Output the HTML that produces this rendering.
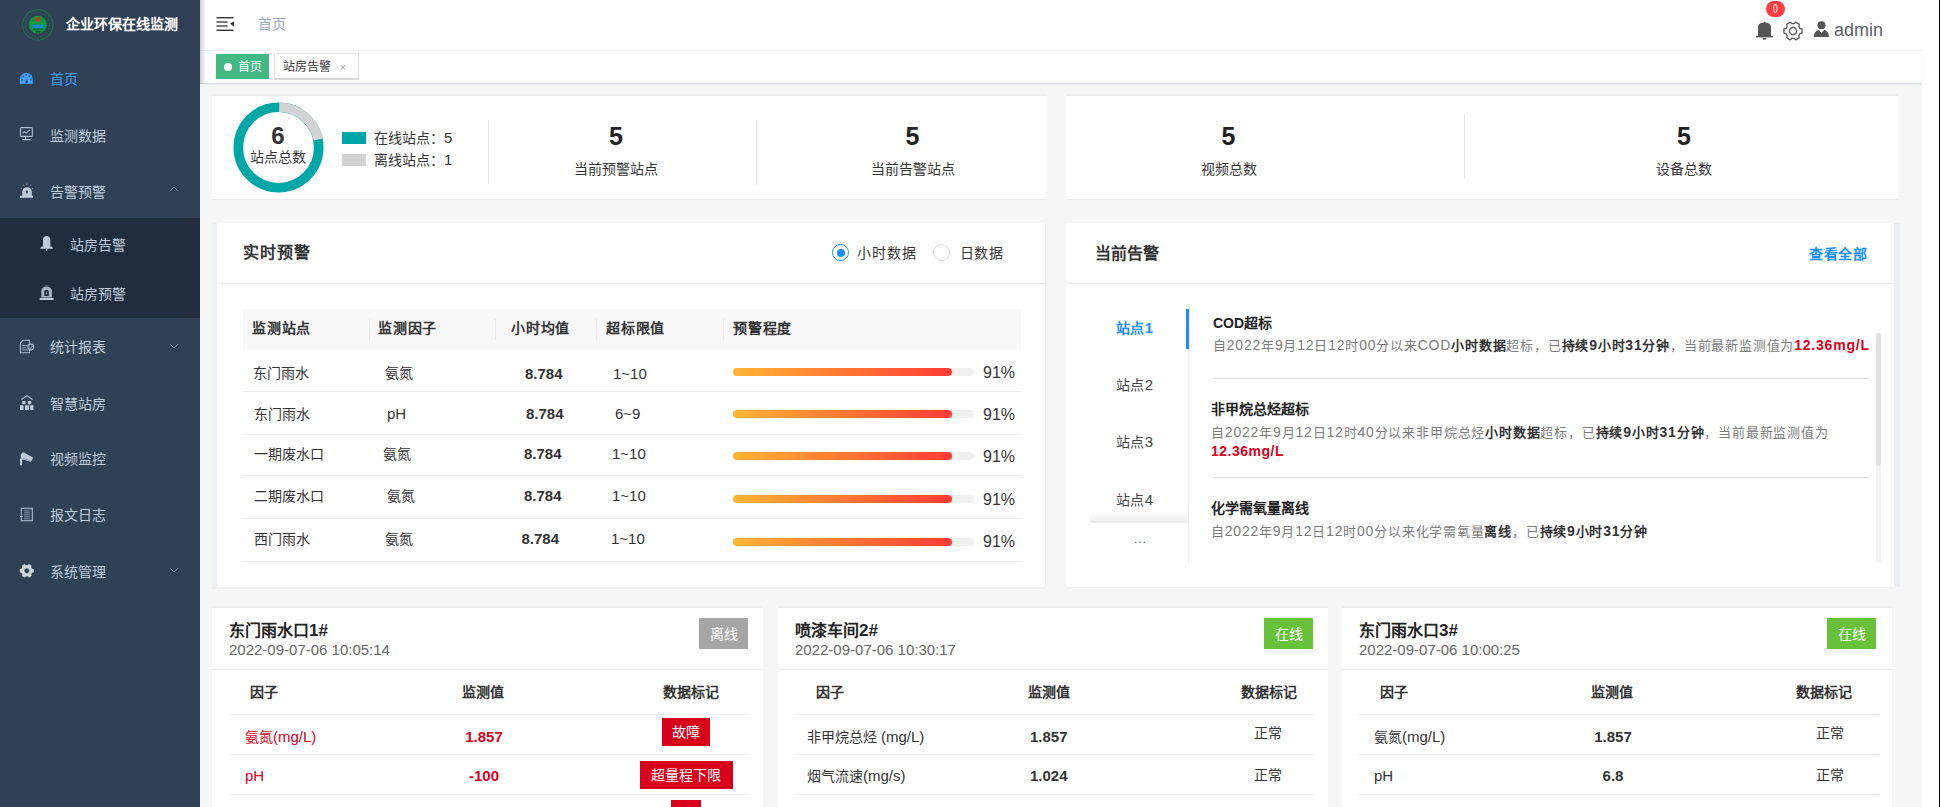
<!DOCTYPE html>
<html lang="zh-CN"><head><meta charset="utf-8"><style>
html,body{margin:0;padding:0;width:1940px;height:807px;overflow:hidden;font-family:"Liberation Sans", sans-serif;}
</style></head><body>
<div style="position:absolute;left:0px;top:0px;width:1940px;height:807px;background:#fff"></div>
<div style="position:absolute;left:200px;top:84px;width:1722px;height:723px;background:#f6f6f6"></div>
<div style="position:absolute;left:1939px;top:0px;width:1px;height:807px;background:#000"></div>
<div style="position:absolute;left:0px;top:0px;width:200px;height:807px;background:#304156"></div>
<div style="position:absolute;left:0px;top:218px;width:200px;height:100px;background:#1f2d3d"></div>
<svg style="position:absolute;left:22px;top:9px" width="32" height="32" viewBox="0 0 32 32">
<circle cx="15.8" cy="15.8" r="15.2" fill="none" stroke="#1e7a45" stroke-width="1.1" opacity="0.8"/>
<circle cx="15.8" cy="15.8" r="12.4" fill="none" stroke="#1e6a45" stroke-width="2.4" stroke-dasharray="1.6 1.4" opacity="0.55"/>
<circle cx="15.8" cy="15.7" r="9" fill="#0c9a3e"/>
<ellipse cx="15.8" cy="10.5" rx="2.2" ry="2.6" fill="#e02a22"/>
<path d="M10.2 19.5 L10.2 16.3 Q11.5 14.6 12.8 16.3 Q14.3 14.4 15.8 16.2 Q17.3 14.4 18.8 16.3 Q20.2 14.6 21.6 16.3 L21.6 19.5 Z" fill="#1a8ad0"/>
<rect x="11" y="19.5" width="9.6" height="1.2" fill="#0a5a2a" opacity="0.7"/>
<rect x="13.4" y="21.6" width="5" height="2.5" fill="#1a3a30" opacity="0.6"/>
</svg>
<div style="position:absolute;left:66px;top:17px;font-size:14px;line-height:14px;color:#fff;font-weight:bold;white-space:nowrap;">企业环保在线监测</div>
<div style="position:absolute;left:50px;top:72px;font-size:14px;line-height:14px;color:#409eff;font-weight:normal;white-space:nowrap;">首页</div>
<div style="position:absolute;left:50px;top:128.5px;font-size:14px;line-height:14px;color:#bfcbd9;font-weight:normal;white-space:nowrap;">监测数据</div>
<div style="position:absolute;left:50px;top:184.5px;font-size:14px;line-height:14px;color:#bfcbd9;font-weight:normal;white-space:nowrap;">告警预警</div>
<div style="position:absolute;left:70px;top:237.5px;font-size:14px;line-height:14px;color:#bfcbd9;font-weight:normal;white-space:nowrap;">站房告警</div>
<div style="position:absolute;left:70px;top:287px;font-size:14px;line-height:14px;color:#bfcbd9;font-weight:normal;white-space:nowrap;">站房预警</div>
<div style="position:absolute;left:50px;top:340px;font-size:14px;line-height:14px;color:#bfcbd9;font-weight:normal;white-space:nowrap;">统计报表</div>
<div style="position:absolute;left:50px;top:396.5px;font-size:14px;line-height:14px;color:#bfcbd9;font-weight:normal;white-space:nowrap;">智慧站房</div>
<div style="position:absolute;left:50px;top:452px;font-size:14px;line-height:14px;color:#bfcbd9;font-weight:normal;white-space:nowrap;">视频监控</div>
<div style="position:absolute;left:50px;top:508px;font-size:14px;line-height:14px;color:#bfcbd9;font-weight:normal;white-space:nowrap;">报文日志</div>
<div style="position:absolute;left:50px;top:564.5px;font-size:14px;line-height:14px;color:#bfcbd9;font-weight:normal;white-space:nowrap;">系统管理</div>
<svg style="position:absolute;left:169px;top:186px" width="10" height="6" viewBox="0 0 10 6"><path d="M1 5 L5 1 L9 5" fill="none" stroke="#7d8a9b" stroke-width="1"/></svg>
<svg style="position:absolute;left:169px;top:343px" width="10" height="6" viewBox="0 0 10 6"><path d="M1 1 L5 5 L9 1" fill="none" stroke="#7d8a9b" stroke-width="1"/></svg>
<svg style="position:absolute;left:169px;top:567px" width="10" height="6" viewBox="0 0 10 6"><path d="M1 1 L5 5 L9 1" fill="none" stroke="#7d8a9b" stroke-width="1"/></svg>
<svg style="position:absolute;left:16px;top:66px" width="24" height="24" viewBox="0 0 24 24"><path d="M3.9 18 L3.9 13.2 A6.4 6.4 0 0 1 16.7 13.2 L16.7 18 Z" fill="#409eff"/><circle cx="7.3" cy="10.2" r="0.8" fill="#304156"/><circle cx="13.4" cy="10.2" r="0.8" fill="#304156"/><circle cx="5.9" cy="13.8" r="0.8" fill="#304156"/><circle cx="15" cy="13.8" r="0.8" fill="#304156"/><circle cx="10.3" cy="8.8" r="0.7" fill="#304156"/><path d="M10 16 L11 12 L11.6 16 Z" fill="#304156"/><rect x="9.3" y="15.6" width="2.4" height="1.2" fill="#304156"/></svg>
<svg style="position:absolute;left:16px;top:122px" width="24" height="24" viewBox="0 0 24 24"><rect x="4.5" y="5.6" width="11.8" height="8.8" rx="1" fill="none" stroke="#bfcbd9" stroke-width="1.1" opacity="0.9"/><path d="M9.7 14.5 V17.4 M6.2 17.6 H14.6" stroke="#bfcbd9" stroke-width="1.1" opacity="0.9"/><path d="M6.5 11.2 L8.3 9.6 L10.3 11 L13.8 8" fill="none" stroke="#bfcbd9" stroke-width="1.3" opacity="0.8"/></svg>
<svg style="position:absolute;left:16px;top:178px" width="24" height="24" viewBox="0 0 24 24"><path d="M6.2 18 V14 A4.8 4.8 0 0 1 15.8 14 V18 Z" fill="#bfcbd9"/><rect x="4" y="17.8" width="13" height="2" fill="#bfcbd9"/><path d="M10.9 12.2 C9.8 12.2 9.6 13.5 10.1 14.5 L10.9 16 L11.7 14.5 C12.2 13.5 12 12.2 10.9 12.2Z" fill="#304156"/><g fill="#bfcbd9" opacity="0.7"><circle cx="10.9" cy="6.2" r="0.7"/><circle cx="7.3" cy="7" r="0.6"/><circle cx="14.5" cy="7" r="0.6"/><circle cx="5.2" cy="10.3" r="0.6"/><circle cx="16.5" cy="10.3" r="0.6"/></g></svg>
<svg style="position:absolute;left:36px;top:231px" width="24" height="24" viewBox="0 0 24 24"><path d="M7 16 V8.5 C7 6.5 8.8 5 10.6 5 C12.4 5 14.3 6.5 14.3 8.5 V16 Z" fill="#bfcbd9"/><path d="M4 17.8 L5.5 15.5 H15.8 L17.2 17.8 Z" fill="#bfcbd9"/><rect x="9.8" y="17.8" width="1.6" height="1.8" fill="#bfcbd9"/></svg>
<svg style="position:absolute;left:36px;top:281px" width="24" height="24" viewBox="0 0 24 24"><path d="M5.3 16.5 V10 A5.3 4.5 0 0 1 15.9 10 V16.5 Z" fill="#bfcbd9" opacity="0.85"/><path d="M8.3 15 V10.5 A2.3 2.3 0 0 1 12.8 10.5 V15 Z" fill="#1f2d3d"/><path d="M10.5 10.5 L11.5 12.5 L10.5 13.8 L9.6 12.5 Z" fill="#bfcbd9" opacity="0.7"/><rect x="3.7" y="17" width="14" height="2" fill="#bfcbd9"/><rect x="9" y="4.2" width="4" height="0.6" fill="#bfcbd9" opacity="0.4"/></svg>
<svg style="position:absolute;left:16px;top:334px" width="24" height="24" viewBox="0 0 24 24"><path d="M7 6.3 H13.5 V18.7 H4.4 V9 Z" fill="none" stroke="#bfcbd9" stroke-width="1.1" opacity="0.85"/><path d="M6 11.5 H11.5 M6 13.8 H10 M6 16 H12" stroke="#bfcbd9" stroke-width="1" opacity="0.75"/><circle cx="14.8" cy="13" r="2.9" fill="#304156" stroke="#bfcbd9" stroke-width="1.1" opacity="0.9"/><path d="M13.6 13.3 L14.6 14.3 L16.2 12" fill="none" stroke="#bfcbd9" stroke-width="0.9"/></svg>
<svg style="position:absolute;left:16px;top:390px" width="24" height="24" viewBox="0 0 24 24"><path d="M5.2 9.5 L10.9 5.8 L16.6 9.5" fill="none" stroke="#bfcbd9" stroke-width="1.2" opacity="0.85"/><g fill="#bfcbd9"><rect x="6.2" y="11" width="3.3" height="3.2"/><rect x="11.9" y="11" width="3.3" height="3.2"/><rect x="4" y="15.2" width="3.5" height="4.8"/><rect x="9" y="15.2" width="3.9" height="4.8"/><rect x="14" y="15.2" width="3.4" height="4.8"/></g></svg>
<svg style="position:absolute;left:16px;top:446px" width="24" height="24" viewBox="0 0 24 24"><path d="M4.6 9 L6.3 6.4 L8 6.6 L16.9 11.6 L16.4 13.4 L14.6 15.8 L9.5 14.2 L6 13.4 L6 19.2 L4 19.2 L4 12.4 L5.2 12.4 Z" fill="#bfcbd9"/><path d="M7 12.6 L13.5 14.3" stroke="#304156" stroke-width="0.6" opacity="0.6"/></svg>
<svg style="position:absolute;left:16px;top:502px" width="24" height="24" viewBox="0 0 24 24"><rect x="5.3" y="6.3" width="11" height="12.4" fill="none" stroke="#bfcbd9" stroke-width="1.1" opacity="0.9"/><g stroke="#bfcbd9" stroke-width="0.9" opacity="0.6"><path d="M8 8.8 H14.5 M8 10.8 H14 M8 12.8 H14 M8 14.8 H14 M8 16.8 H14"/></g><path d="M4 14.5 H6.5" stroke="#bfcbd9" stroke-width="0.8"/></svg>
<svg style="position:absolute;left:16px;top:558px" width="24" height="24" viewBox="0 0 24 24"><path fill="#d1d5da" fill-rule="evenodd" stroke="#d1d5da" stroke-width="0.6" stroke-linejoin="round" d="M15.87 14.65 L17.48 14.10 L17.48 11.50 L15.87 10.95 L14.94 9.33 L15.26 7.67 L13.01 6.37 L11.74 7.48 L9.86 7.48 L8.59 6.37 L6.34 7.67 L6.66 9.33 L5.73 10.95 L4.12 11.50 L4.12 14.10 L5.73 14.65 L6.66 16.27 L6.34 17.93 L8.59 19.23 L9.86 18.12 L11.74 18.12 L13.01 19.23 L15.26 17.93 L14.94 16.27 Z M13.50 12.8 A2.7 2.7 0 1 0 8.10 12.8 A2.7 2.7 0 1 0 13.50 12.8 Z"/></svg>
<div style="position:absolute;left:200px;top:0px;width:1722px;height:51px;background:#fff;border-bottom:1px solid #f0f0f0;box-sizing:border-box"></div>
<svg style="position:absolute;left:216px;top:17px" width="18" height="14" viewBox="0 0 18 14">
<rect x="0.5" y="0" width="17" height="1.4" fill="#333"/><rect x="0.5" y="4.3" width="11" height="1.4" fill="#444"/>
<rect x="0.5" y="8.3" width="11" height="1.4" fill="#444"/><rect x="0.5" y="12.6" width="17" height="1.4" fill="#333"/>
<path d="M18 4.2 L14 6.8 L18 9.4 Z" fill="#333"/></svg>
<div style="position:absolute;left:258px;top:17px;font-size:14px;line-height:14px;color:#97a8be;font-weight:normal;white-space:nowrap;">首页</div>
<svg style="position:absolute;left:1756px;top:21px" width="17" height="19" viewBox="0 0 17 19">
<path d="M2 15.2 L2 6.5 C2 3.2 4.5 1.8 7.6 1.6 L8.5 0.4 L9.4 1.6 C12.5 1.8 15 3.2 15 6.5 L15 15.2 Z" fill="#555"/>
<rect x="0" y="14.8" width="17" height="1.6" fill="#555"/>
<path d="M6.5 17 L10.5 17 C10.5 18.2 9.6 18.8 8.5 18.8 C7.4 18.8 6.5 18.2 6.5 17 Z" fill="#555"/></svg>
<div style="position:absolute;left:1766px;top:1px;width:19px;height:16px;border-radius:8px;background:#ff3d43;color:#fff;font-size:12px;line-height:16px;text-align:center;transform:scaleX(1)"><span style="display:inline-block;transform:scaleX(0.7)">0</span></div>
<svg style="position:absolute;left:1783px;top:21px" width="20" height="20" viewBox="0 0 20 20">
<path d="M16.91 12.65 L19.06 12.09 L19.06 7.91 L16.91 7.35 L15.75 5.34 L16.34 3.20 L12.72 1.11 L11.16 2.69 L8.84 2.69 L7.28 1.11 L3.66 3.20 L4.25 5.34 L3.09 7.35 L0.94 7.91 L0.94 12.09 L3.09 12.65 L4.25 14.66 L3.66 16.80 L7.28 18.89 L8.84 17.31 L11.16 17.31 L12.72 18.89 L16.34 16.80 L15.75 14.66 Z" fill="none" stroke="#555" stroke-width="1.3" stroke-linejoin="round"/>
<circle cx="10" cy="10" r="3.6" fill="none" stroke="#666" stroke-width="1.6"/></svg>
<svg style="position:absolute;left:1814px;top:21px" width="15" height="16" viewBox="0 0 15 16">
<circle cx="7.5" cy="4.2" r="4" fill="#555"/><path d="M0 16 C0 11 3 9 5 9 L7.5 12 L10 9 C12 9 15 11 15 16 Z" fill="#555"/></svg>
<div style="position:absolute;left:1834px;top:21px;font-size:18px;line-height:18px;color:#5a5e66;font-weight:normal;white-space:nowrap;">admin</div>
<div style="position:absolute;left:200px;top:0px;width:6px;height:84px;background:linear-gradient(90deg,rgba(0,21,41,.2),rgba(0,21,41,0));z-index:5"></div>
<div style="position:absolute;left:200px;top:51px;width:1722px;height:33px;background:#fff;border-bottom:1px solid #d8dce5;box-sizing:border-box;box-shadow:0 1px 2px 0 rgba(0,0,0,.05)"></div>
<div style="position:absolute;left:216px;top:54px;width:53px;height:25px;background:#42b983"></div>
<div style="position:absolute;left:224px;top:63px;width:8px;height:8px;border-radius:4px;background:#fff"></div>
<div style="position:absolute;left:238px;top:61px;font-size:12px;line-height:12px;color:#fff;font-weight:normal;white-space:nowrap;">首页</div>
<div style="position:absolute;left:274px;top:53px;width:85px;height:27px;background:#fff;border:1px solid #e2e2e2;border-bottom:2px solid #d9d9d9;box-sizing:border-box"></div>
<div style="position:absolute;left:283px;top:61px;font-size:12px;line-height:12px;color:#333;font-weight:normal;white-space:nowrap;">站房告警</div>
<div style="position:absolute;left:340px;top:63px;font-size:10px;line-height:10px;color:#999;font-weight:normal;white-space:nowrap;">×</div>
<div style="position:absolute;left:212px;top:94px;width:835px;height:106px;background:#fff;border-top:2px solid #efefef;border-bottom:1px solid #ebebeb;box-sizing:border-box"></div>
<div style="position:absolute;left:1066px;top:94px;width:832px;height:106px;background:#fff;border-top:2px solid #efefef;border-bottom:1px solid #ebebeb;box-sizing:border-box"></div>
<svg style="position:absolute;left:233px;top:102px" width="91" height="91" viewBox="0 0 91 91">
<circle cx="45.5" cy="45.5" r="40.2" fill="none" stroke="#00a7a7" stroke-width="9.6"/>
<path d="M46.2 5.3 A40.2 40.2 0 0 1 85.2 37.5" fill="none" stroke="#d3d3d3" stroke-width="9.6"/>
</svg>
<div style="position:absolute;left:78px;width:400px;text-align:center;top:124px;font-size:24px;line-height:24px;color:#333;font-weight:bold;white-space:nowrap;">6</div>
<div style="position:absolute;left:78px;width:400px;text-align:center;top:150px;font-size:14px;line-height:14px;color:#333;font-weight:normal;white-space:nowrap;">站点总数</div>
<div style="position:absolute;left:342px;top:132px;width:24px;height:12px;background:#00a7a7"></div>
<div style="position:absolute;left:342px;top:154px;width:24px;height:12px;background:#d3d3d3"></div>
<div style="position:absolute;left:374px;top:131px;font-size:14px;line-height:14px;color:#333;font-weight:normal;white-space:nowrap;">在线站点：<span style="font-size:15px">5</span></div>
<div style="position:absolute;left:374px;top:153px;font-size:14px;line-height:14px;color:#333;font-weight:normal;white-space:nowrap;">离线站点：<span style="font-size:15px">1</span></div>
<div style="position:absolute;left:488px;top:120px;width:1px;height:64px;background:#e6e6e6"></div>
<div style="position:absolute;left:756px;top:120px;width:1px;height:65px;background:#e6e6e6"></div>
<div style="position:absolute;left:1464px;top:114px;width:1px;height:65px;background:#e6e6e6"></div>
<div style="position:absolute;left:416px;width:400px;text-align:center;top:124px;font-size:25px;line-height:25px;color:#222;font-weight:bold;white-space:nowrap;">5</div>
<div style="position:absolute;left:416px;width:400px;text-align:center;top:162px;font-size:14px;line-height:14px;color:#333;font-weight:normal;white-space:nowrap;">当前预警站点</div>
<div style="position:absolute;left:712.5px;width:400px;text-align:center;top:124px;font-size:25px;line-height:25px;color:#222;font-weight:bold;white-space:nowrap;">5</div>
<div style="position:absolute;left:712.5px;width:400px;text-align:center;top:162px;font-size:14px;line-height:14px;color:#333;font-weight:normal;white-space:nowrap;">当前告警站点</div>
<div style="position:absolute;left:1028.5px;width:400px;text-align:center;top:124px;font-size:25px;line-height:25px;color:#222;font-weight:bold;white-space:nowrap;">5</div>
<div style="position:absolute;left:1028.5px;width:400px;text-align:center;top:162px;font-size:14px;line-height:14px;color:#333;font-weight:normal;white-space:nowrap;">视频总数</div>
<div style="position:absolute;left:1484px;width:400px;text-align:center;top:124px;font-size:25px;line-height:25px;color:#222;font-weight:bold;white-space:nowrap;">5</div>
<div style="position:absolute;left:1484px;width:400px;text-align:center;top:162px;font-size:14px;line-height:14px;color:#333;font-weight:normal;white-space:nowrap;">设备总数</div>
<div style="position:absolute;left:212px;top:223px;width:5px;height:366px;background:#eef0f3"></div>
<div style="position:absolute;left:217px;top:223px;width:829px;height:364px;background:#fff;border-right:1px solid #ebebeb;box-sizing:border-box"></div>
<div style="position:absolute;left:212px;top:587px;width:835px;height:2px;background:#efefef"></div>
<div style="position:absolute;left:217px;top:283px;width:829px;height:1px;background:#ededed"></div>
<div style="position:absolute;left:243px;top:245px;font-size:16px;line-height:16px;color:#333;font-weight:bold;white-space:nowrap;letter-spacing:1px">实时预警</div>
<div style="position:absolute;left:832px;top:244px;width:17px;height:17px;border-radius:50%;border:1.5px solid #1890ff;box-sizing:border-box;background:#fff"></div><div style="position:absolute;left:836.5px;top:248.5px;width:8px;height:8px;border-radius:50%;background:#1890ff"></div>
<div style="position:absolute;left:857px;top:246px;font-size:14px;line-height:14px;color:#333;font-weight:normal;white-space:nowrap;letter-spacing:0.9px">小时数据</div>
<div style="position:absolute;left:933px;top:244px;width:17px;height:17px;border-radius:50%;border:1.2px solid #d9d9d9;box-sizing:border-box;background:#fff"></div>
<div style="position:absolute;left:960px;top:246px;font-size:14px;line-height:14px;color:#333;font-weight:normal;white-space:nowrap;letter-spacing:0.4px">日数据</div>
<div style="position:absolute;left:243px;top:309px;width:778px;height:41px;background:#f8f8f9"></div>
<div style="position:absolute;left:369px;top:319px;width:1px;height:21px;background:#e8e8e8"></div>
<div style="position:absolute;left:495px;top:319px;width:1px;height:21px;background:#e8e8e8"></div>
<div style="position:absolute;left:596px;top:319px;width:1px;height:21px;background:#e8e8e8"></div>
<div style="position:absolute;left:723px;top:319px;width:1px;height:21px;background:#e8e8e8"></div>
<div style="position:absolute;left:252px;top:321px;font-size:14px;line-height:14px;color:#333;font-weight:bold;white-space:nowrap;letter-spacing:0.8px">监测站点</div>
<div style="position:absolute;left:378px;top:321px;font-size:14px;line-height:14px;color:#333;font-weight:bold;white-space:nowrap;letter-spacing:0.8px">监测因子</div>
<div style="position:absolute;left:511px;top:321px;font-size:14px;line-height:14px;color:#333;font-weight:bold;white-space:nowrap;letter-spacing:0.8px">小时均值</div>
<div style="position:absolute;left:606px;top:321px;font-size:14px;line-height:14px;color:#333;font-weight:bold;white-space:nowrap;letter-spacing:0.8px">超标限值</div>
<div style="position:absolute;left:733px;top:321px;font-size:14px;line-height:14px;color:#333;font-weight:bold;white-space:nowrap;letter-spacing:0.8px">预警程度</div>
<div style="position:absolute;left:243px;top:391px;width:778px;height:1px;background:#ededed"></div>
<div style="position:absolute;left:253px;top:366px;font-size:14px;line-height:14px;color:#333;font-weight:normal;white-space:nowrap;">东门雨水</div>
<div style="position:absolute;left:385px;top:366px;font-size:14px;line-height:14px;color:#333;font-weight:normal;white-space:nowrap;">氨氮</div>
<div style="position:absolute;left:525px;top:365.5px;font-size:15px;line-height:15px;color:#333;font-weight:bold;white-space:nowrap;">8.784</div>
<div style="position:absolute;left:613px;top:365.5px;font-size:15px;line-height:15px;color:#333;font-weight:normal;white-space:nowrap;">1~10</div>
<div style="position:absolute;left:733px;top:367.5px;width:241px;height:8.4px;background:#f0f0f0;border-radius:4.2px"></div>
<div style="position:absolute;left:733px;top:367.5px;width:219px;height:8.4px;background:linear-gradient(90deg,#ffb534,#ff3b36);border-radius:4.2px"></div>
<div style="position:absolute;left:983px;top:365px;font-size:16px;line-height:16px;color:#333;font-weight:normal;white-space:nowrap;">91%</div>
<div style="position:absolute;left:243px;top:434px;width:778px;height:1px;background:#ededed"></div>
<div style="position:absolute;left:254px;top:406.5px;font-size:14px;line-height:14px;color:#333;font-weight:normal;white-space:nowrap;">东门雨水</div>
<div style="position:absolute;left:387px;top:405.5px;font-size:15px;line-height:15px;color:#333;font-weight:normal;white-space:nowrap;">pH</div>
<div style="position:absolute;left:526px;top:406.0px;font-size:15px;line-height:15px;color:#333;font-weight:bold;white-space:nowrap;">8.784</div>
<div style="position:absolute;left:615px;top:406.0px;font-size:15px;line-height:15px;color:#333;font-weight:normal;white-space:nowrap;">6~9</div>
<div style="position:absolute;left:733px;top:410px;width:241px;height:8.4px;background:#f0f0f0;border-radius:4.2px"></div>
<div style="position:absolute;left:733px;top:410px;width:219px;height:8.4px;background:linear-gradient(90deg,#ffb534,#ff3b36);border-radius:4.2px"></div>
<div style="position:absolute;left:983px;top:407.3px;font-size:16px;line-height:16px;color:#333;font-weight:normal;white-space:nowrap;">91%</div>
<div style="position:absolute;left:243px;top:475px;width:778px;height:1px;background:#ededed"></div>
<div style="position:absolute;left:254px;top:446.5px;font-size:14px;line-height:14px;color:#333;font-weight:normal;white-space:nowrap;">一期废水口</div>
<div style="position:absolute;left:383px;top:446.5px;font-size:14px;line-height:14px;color:#333;font-weight:normal;white-space:nowrap;">氨氮</div>
<div style="position:absolute;left:524px;top:446.0px;font-size:15px;line-height:15px;color:#333;font-weight:bold;white-space:nowrap;">8.784</div>
<div style="position:absolute;left:612px;top:446.0px;font-size:15px;line-height:15px;color:#333;font-weight:normal;white-space:nowrap;">1~10</div>
<div style="position:absolute;left:733px;top:452px;width:241px;height:8.4px;background:#f0f0f0;border-radius:4.2px"></div>
<div style="position:absolute;left:733px;top:452px;width:219px;height:8.4px;background:linear-gradient(90deg,#ffb534,#ff3b36);border-radius:4.2px"></div>
<div style="position:absolute;left:983px;top:449.4px;font-size:16px;line-height:16px;color:#333;font-weight:normal;white-space:nowrap;">91%</div>
<div style="position:absolute;left:243px;top:518px;width:778px;height:1px;background:#ededed"></div>
<div style="position:absolute;left:254px;top:488.5px;font-size:14px;line-height:14px;color:#333;font-weight:normal;white-space:nowrap;">二期废水口</div>
<div style="position:absolute;left:387px;top:488.5px;font-size:14px;line-height:14px;color:#333;font-weight:normal;white-space:nowrap;">氨氮</div>
<div style="position:absolute;left:524px;top:488.0px;font-size:15px;line-height:15px;color:#333;font-weight:bold;white-space:nowrap;">8.784</div>
<div style="position:absolute;left:612px;top:488.0px;font-size:15px;line-height:15px;color:#333;font-weight:normal;white-space:nowrap;">1~10</div>
<div style="position:absolute;left:733px;top:495px;width:241px;height:8.4px;background:#f0f0f0;border-radius:4.2px"></div>
<div style="position:absolute;left:733px;top:495px;width:219px;height:8.4px;background:linear-gradient(90deg,#ffb534,#ff3b36);border-radius:4.2px"></div>
<div style="position:absolute;left:983px;top:491.6px;font-size:16px;line-height:16px;color:#333;font-weight:normal;white-space:nowrap;">91%</div>
<div style="position:absolute;left:243px;top:561px;width:778px;height:1px;background:#ededed"></div>
<div style="position:absolute;left:254px;top:531.5px;font-size:14px;line-height:14px;color:#333;font-weight:normal;white-space:nowrap;">西门雨水</div>
<div style="position:absolute;left:385px;top:531.5px;font-size:14px;line-height:14px;color:#333;font-weight:normal;white-space:nowrap;">氨氮</div>
<div style="position:absolute;left:521.5px;top:531.0px;font-size:15px;line-height:15px;color:#333;font-weight:bold;white-space:nowrap;">8.784</div>
<div style="position:absolute;left:611px;top:531.0px;font-size:15px;line-height:15px;color:#333;font-weight:normal;white-space:nowrap;">1~10</div>
<div style="position:absolute;left:733px;top:537.5px;width:241px;height:8.4px;background:#f0f0f0;border-radius:4.2px"></div>
<div style="position:absolute;left:733px;top:537.5px;width:219px;height:8.4px;background:linear-gradient(90deg,#ffb534,#ff3b36);border-radius:4.2px"></div>
<div style="position:absolute;left:983px;top:533.7px;font-size:16px;line-height:16px;color:#333;font-weight:normal;white-space:nowrap;">91%</div>
<div style="position:absolute;left:1066px;top:223px;width:828px;height:365px;background:#fff;border-bottom:1px solid #efefef;box-sizing:border-box"></div>
<div style="position:absolute;left:1894px;top:223px;width:6px;height:364px;background:#eceef3"></div>
<div style="position:absolute;left:1066px;top:283px;width:828px;height:1px;background:#ededed"></div>
<div style="position:absolute;left:1095px;top:246px;font-size:16px;line-height:16px;color:#333;font-weight:bold;white-space:nowrap;">当前告警</div>
<div style="position:absolute;left:1809px;top:247px;font-size:14px;line-height:14px;color:#1890ff;font-weight:bold;white-space:nowrap;letter-spacing:0.5px">查看全部</div>
<div style="position:absolute;left:1188px;top:309px;width:1px;height:254px;background:#ececec"></div>
<div style="position:absolute;left:1186px;top:309px;width:3px;height:40px;background:#1890ff"></div>
<div style="position:absolute;left:1116px;top:321px;font-size:14px;line-height:14px;color:#1890ff;font-weight:bold;white-space:nowrap;letter-spacing:0.4px">站点<span style="font-size:15px">1</span></div>
<div style="position:absolute;left:1116px;top:378px;font-size:14px;line-height:14px;color:#444;font-weight:normal;white-space:nowrap;letter-spacing:0.4px">站点<span style="font-size:15px">2</span></div>
<div style="position:absolute;left:1116px;top:435px;font-size:14px;line-height:14px;color:#444;font-weight:normal;white-space:nowrap;letter-spacing:0.4px">站点<span style="font-size:15px">3</span></div>
<div style="position:absolute;left:1116px;top:493px;font-size:14px;line-height:14px;color:#444;font-weight:normal;white-space:nowrap;letter-spacing:0.4px">站点<span style="font-size:15px">4</span></div>
<div style="position:absolute;left:1134px;top:533px;font-size:12px;line-height:12px;color:#555;font-weight:normal;white-space:nowrap;letter-spacing:1px">...</div>
<div style="position:absolute;left:1090px;top:511px;width:98px;height:12px;background:linear-gradient(#fff,#ececec)"></div>
<div style="position:absolute;left:1213px;top:316px;font-size:14px;line-height:14px;color:#222;font-weight:bold;white-space:nowrap;">COD超标</div>
<div style="position:absolute;left:1213px;top:339px;font-size:13px;line-height:13px;color:#7a7a7a;font-weight:normal;white-space:nowrap;letter-spacing:0.79px">自<span style="font-size:14px">2022</span>年<span style="font-size:14px">9</span>月<span style="font-size:14px">12</span>日<span style="font-size:14px">12</span>时<span style="font-size:14px">00</span>分以来<span style="font-size:14px">COD</span><b style="color:#333">小时数据</b>超标，已<b style="color:#333">持续<span style="font-size:14px">9</span>小时<span style="font-size:14px">31</span>分钟</b>，当前最新监测值为<b style="color:#d9001b"><span style="font-size:14px">12.36mg/L</span></b></div>
<div style="position:absolute;left:1211px;top:378px;width:657px;height:1px;background:#e6e6e6"></div>
<div style="position:absolute;left:1211px;top:402px;font-size:14px;line-height:14px;color:#222;font-weight:bold;white-space:nowrap;">非甲烷总烃超标</div>
<div style="position:absolute;left:1211px;top:426px;font-size:13px;line-height:13px;color:#7a7a7a;font-weight:normal;white-space:nowrap;letter-spacing:0.81px">自<span style="font-size:14px">2022</span>年<span style="font-size:14px">9</span>月<span style="font-size:14px">12</span>日<span style="font-size:14px">12</span>时<span style="font-size:14px">40</span>分以来非甲烷总烃<b style="color:#333">小时数据</b>超标，已<b style="color:#333">持续<span style="font-size:14px">9</span>小时<span style="font-size:14px">31</span>分钟</b>，当前最新监测值为</div>
<div style="position:absolute;left:1211px;top:445px;font-size:13px;line-height:13px;color:#d9001b;font-weight:normal;white-space:nowrap;letter-spacing:0.5px"><b style="color:#d9001b"><span style="font-size:14px">12.36mg/L</span></b></div>
<div style="position:absolute;left:1211px;top:477px;width:657px;height:1px;background:#e6e6e6"></div>
<div style="position:absolute;left:1211px;top:501px;font-size:14px;line-height:14px;color:#222;font-weight:bold;white-space:nowrap;">化学需氧量离线</div>
<div style="position:absolute;left:1211px;top:525px;font-size:13px;line-height:13px;color:#7a7a7a;font-weight:normal;white-space:nowrap;letter-spacing:0.78px">自<span style="font-size:14px">2022</span>年<span style="font-size:14px">9</span>月<span style="font-size:14px">12</span>日<span style="font-size:14px">12</span>时<span style="font-size:14px">00</span>分以来化学需氧量<b style="color:#333">离线</b>，已<b style="color:#333">持续<span style="font-size:14px">9</span>小时<span style="font-size:14px">31</span>分钟</b></div>
<div style="position:absolute;left:1876px;top:333px;width:5px;height:230px;background:#f4f4f4;border-radius:3px"></div>
<div style="position:absolute;left:1876px;top:333px;width:5px;height:133px;background:#e2e2e2;border-radius:3px"></div>
<div style="position:absolute;left:212px;top:606px;width:551px;height:201px;background:#fff;border-top:2px solid #efefef;box-sizing:border-box"></div>
<div style="position:absolute;left:212px;top:669px;width:551px;height:1px;background:#ededed"></div>
<div style="position:absolute;left:229px;top:622.5px;font-size:16px;line-height:16px;color:#222;font-weight:bold;white-space:nowrap;">东门雨水口<span style="font-size:17px">1#</span></div>
<div style="position:absolute;left:229px;top:642px;font-size:15px;line-height:15px;color:#666;font-weight:normal;white-space:nowrap;">2022-09-07-06 10:05:14</div>
<div style="position:absolute;left:699px;top:618px;width:49px;height:31px;background:#a6a6a6"></div>
<div style="position:absolute;left:523.5px;width:400px;text-align:center;top:627px;font-size:14px;line-height:14px;color:#fff;font-weight:normal;white-space:nowrap;">离线</div>
<div style="position:absolute;left:250px;top:685px;font-size:14px;line-height:14px;color:#333;font-weight:bold;white-space:nowrap;">因子</div>
<div style="position:absolute;left:282.8px;width:400px;text-align:center;top:685px;font-size:14px;line-height:14px;color:#333;font-weight:bold;white-space:nowrap;">监测值</div>
<div style="position:absolute;left:662.5px;top:685px;font-size:14px;line-height:14px;color:#333;font-weight:bold;white-space:nowrap;">数据标记</div>
<div style="position:absolute;left:229px;top:714px;width:520px;height:1px;background:#ededed"></div>
<div style="position:absolute;left:229px;top:754px;width:520px;height:1px;background:#ededed"></div>
<div style="position:absolute;left:229px;top:794px;width:520px;height:1px;background:#ededed"></div>
<div style="position:absolute;left:245px;top:729.5px;font-size:14px;line-height:14px;color:#d9001b;font-weight:normal;white-space:nowrap;">氨氮<span style="font-size:15px">(mg/L)</span></div>
<div style="position:absolute;left:284px;width:400px;text-align:center;top:729.0px;font-size:15px;line-height:15px;color:#d9001b;font-weight:bold;white-space:nowrap;">1.857</div>
<div style="position:absolute;left:662.0px;top:718px;width:48px;height:28px;background:#d9001b;color:#fff;font-size:14px;line-height:28px;text-align:center">故障</div>
<div style="position:absolute;left:245px;top:768.5px;font-size:14px;line-height:14px;color:#d9001b;font-weight:normal;white-space:nowrap;"><span style="font-size:15px">pH</span></div>
<div style="position:absolute;left:284px;width:400px;text-align:center;top:768.0px;font-size:15px;line-height:15px;color:#d9001b;font-weight:bold;white-space:nowrap;">-100</div>
<div style="position:absolute;left:639.5px;top:760.5px;width:93px;height:28px;background:#d9001b;color:#fff;font-size:14px;line-height:28px;text-align:center">超量程下限</div>
<div style="position:absolute;left:671px;top:800px;width:30px;height:7px;background:#d9001b"></div>
<div style="position:absolute;left:778px;top:606px;width:550px;height:201px;background:#fff;border-top:2px solid #efefef;box-sizing:border-box"></div>
<div style="position:absolute;left:778px;top:669px;width:550px;height:1px;background:#ededed"></div>
<div style="position:absolute;left:795px;top:622.5px;font-size:16px;line-height:16px;color:#222;font-weight:bold;white-space:nowrap;">喷漆车间<span style="font-size:17px">2#</span></div>
<div style="position:absolute;left:795px;top:642px;font-size:15px;line-height:15px;color:#666;font-weight:normal;white-space:nowrap;">2022-09-07-06 10:30:17</div>
<div style="position:absolute;left:1264px;top:618px;width:49px;height:31px;background:#67c23a"></div>
<div style="position:absolute;left:1088.5px;width:400px;text-align:center;top:627px;font-size:14px;line-height:14px;color:#fff;font-weight:normal;white-space:nowrap;">在线</div>
<div style="position:absolute;left:816px;top:685px;font-size:14px;line-height:14px;color:#333;font-weight:bold;white-space:nowrap;">因子</div>
<div style="position:absolute;left:848.5999999999999px;width:400px;text-align:center;top:685px;font-size:14px;line-height:14px;color:#333;font-weight:bold;white-space:nowrap;">监测值</div>
<div style="position:absolute;left:1241px;top:685px;font-size:14px;line-height:14px;color:#333;font-weight:bold;white-space:nowrap;">数据标记</div>
<div style="position:absolute;left:795px;top:714px;width:520px;height:1px;background:#ededed"></div>
<div style="position:absolute;left:795px;top:754px;width:520px;height:1px;background:#ededed"></div>
<div style="position:absolute;left:795px;top:794px;width:520px;height:1px;background:#ededed"></div>
<div style="position:absolute;left:807px;top:729.5px;font-size:14px;line-height:14px;color:#333;font-weight:normal;white-space:nowrap;">非甲烷总烃 <span style="font-size:15px">(mg/L)</span></div>
<div style="position:absolute;left:848.75px;width:400px;text-align:center;top:729.0px;font-size:15px;line-height:15px;color:#333;font-weight:bold;white-space:nowrap;">1.857</div>
<div style="position:absolute;left:1068px;width:400px;text-align:center;top:725.5px;font-size:14px;line-height:14px;color:#333;font-weight:normal;white-space:nowrap;">正常</div>
<div style="position:absolute;left:807px;top:768.5px;font-size:14px;line-height:14px;color:#333;font-weight:normal;white-space:nowrap;">烟气流速<span style="font-size:15px">(mg/s)</span></div>
<div style="position:absolute;left:848.75px;width:400px;text-align:center;top:768.0px;font-size:15px;line-height:15px;color:#333;font-weight:bold;white-space:nowrap;">1.024</div>
<div style="position:absolute;left:1068px;width:400px;text-align:center;top:767.5px;font-size:14px;line-height:14px;color:#333;font-weight:normal;white-space:nowrap;">正常</div>
<div style="position:absolute;left:1342px;top:606px;width:550px;height:201px;background:#fff;border-top:2px solid #efefef;box-sizing:border-box"></div>
<div style="position:absolute;left:1342px;top:669px;width:550px;height:1px;background:#ededed"></div>
<div style="position:absolute;left:1359px;top:622.5px;font-size:16px;line-height:16px;color:#222;font-weight:bold;white-space:nowrap;">东门雨水口<span style="font-size:17px">3#</span></div>
<div style="position:absolute;left:1359px;top:642px;font-size:15px;line-height:15px;color:#666;font-weight:normal;white-space:nowrap;">2022-09-07-06 10:00:25</div>
<div style="position:absolute;left:1827px;top:618px;width:49px;height:31px;background:#67c23a"></div>
<div style="position:absolute;left:1651.5px;width:400px;text-align:center;top:627px;font-size:14px;line-height:14px;color:#fff;font-weight:normal;white-space:nowrap;">在线</div>
<div style="position:absolute;left:1380px;top:685px;font-size:14px;line-height:14px;color:#333;font-weight:bold;white-space:nowrap;">因子</div>
<div style="position:absolute;left:1412px;width:400px;text-align:center;top:685px;font-size:14px;line-height:14px;color:#333;font-weight:bold;white-space:nowrap;">监测值</div>
<div style="position:absolute;left:1795.5px;top:685px;font-size:14px;line-height:14px;color:#333;font-weight:bold;white-space:nowrap;">数据标记</div>
<div style="position:absolute;left:1359px;top:714px;width:520px;height:1px;background:#ededed"></div>
<div style="position:absolute;left:1359px;top:754px;width:520px;height:1px;background:#ededed"></div>
<div style="position:absolute;left:1359px;top:794px;width:520px;height:1px;background:#ededed"></div>
<div style="position:absolute;left:1374px;top:729.5px;font-size:14px;line-height:14px;color:#333;font-weight:normal;white-space:nowrap;">氨氮<span style="font-size:15px">(mg/L)</span></div>
<div style="position:absolute;left:1413px;width:400px;text-align:center;top:729.0px;font-size:15px;line-height:15px;color:#333;font-weight:bold;white-space:nowrap;">1.857</div>
<div style="position:absolute;left:1629.5px;width:400px;text-align:center;top:725.5px;font-size:14px;line-height:14px;color:#333;font-weight:normal;white-space:nowrap;">正常</div>
<div style="position:absolute;left:1374px;top:768.5px;font-size:14px;line-height:14px;color:#333;font-weight:normal;white-space:nowrap;"><span style="font-size:15px">pH</span></div>
<div style="position:absolute;left:1413px;width:400px;text-align:center;top:768.0px;font-size:15px;line-height:15px;color:#333;font-weight:bold;white-space:nowrap;">6.8</div>
<div style="position:absolute;left:1629.5px;width:400px;text-align:center;top:767.5px;font-size:14px;line-height:14px;color:#333;font-weight:normal;white-space:nowrap;">正常</div>
</body></html>
